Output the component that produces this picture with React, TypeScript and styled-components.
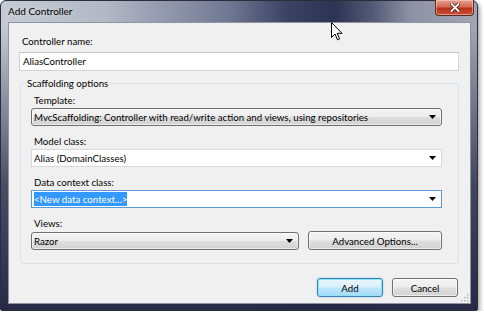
import styled, { createGlobalStyle } from "styled-components";

const GlobalStyle = createGlobalStyle`
	html, body {
		margin: 0;
		padding: 0;
		background: #ffffff;
	}
	body {
		font-family: Lato, "Liberation Sans", Arial, sans-serif;
		font-size: 9.7px;
		color: #000;
	}
`;

const ArrowDown = () => (
	<svg width="7" height="4" viewBox="0 0 7 4">
		<path d="M0 0 H7 L3.5 4 Z" fill="#000" />
	</svg>
);

const Cursor = () => (
	<CursorWrap>
		<svg width="12" height="19" viewBox="0 0 12 19">
			<path
				d="M0.5 0.5 L0.5 15.5 L4 12 L6.5 17.8 L8.6 16.9 L6.2 11.3 L11 11.3 Z"
				fill="#ffffff"
				stroke="#000000"
				strokeWidth="1"
				strokeLinejoin="round"
			/>
		</svg>
	</CursorWrap>
);

const Grip = () => (
	<GripWrap>
		<svg width="8" height="8" viewBox="0 0 8 8">
			{[
				[6, 0],
				[6, 3],
				[3, 3],
				[6, 6],
				[3, 6],
				[0, 6],
			].map(([x, y]) => (
				<rect key={`${x}-${y}`} x={x} y={y} width="1.5" height="1.5" fill="#b5b5b5" />
			))}
		</svg>
	</GripWrap>
);

export default function App() {
	return (
		<>
			<GlobalStyle />
			<Window>
				<TitleBar>
					<Title>Add Controller</Title>
					<CloseButton>
						<svg width="10" height="9" viewBox="0 0 10 9">
							<path
								d="M1.5 1 L8.5 8 M8.5 1 L1.5 8"
								stroke="#4a1a14"
								strokeWidth="3.4"
								strokeLinecap="square"
							/>
							<path
								d="M1.5 1 L8.5 8 M8.5 1 L1.5 8"
								stroke="#ffffff"
								strokeWidth="1.8"
								strokeLinecap="square"
							/>
						</svg>
					</CloseButton>
				</TitleBar>

				<Client>
					<Label>Controller name:</Label>
					<TextInput>AliasController</TextInput>

					<GroupBox>
						<Legend>Scaffolding options</Legend>

						<Label>Template:</Label>
						<Combo $kind="button">
							<ComboText>MvcScaffolding: Controller with read/write action and views, using repositories</ComboText>
							<ArrowDown />
						</Combo>

						<Label>Model class:</Label>
						<Combo $kind="edit">
							<ComboText>Alias (DomainClasses)</ComboText>
							<ArrowDown />
						</Combo>

						<Label>Data context class:</Label>
						<Combo $kind="focus">
							<ComboText>
								<Selected>&lt;New data context...&gt;</Selected>
							</ComboText>
							<ArrowDown />
						</Combo>

						<Label>Views:</Label>
						<ViewsRow>
							<Combo $kind="button" $width={268}>
								<ComboText>Razor</ComboText>
								<ArrowDown />
							</Combo>
							<Button $width={134}>Advanced Options...</Button>
						</ViewsRow>
					</GroupBox>

					<Footer>
						<Button $default $width={66}>Add</Button>
						<Button $width={66}>Cancel</Button>
					</Footer>

					<Grip />
				</Client>

				<Cursor />
			</Window>
		</>
	);
}

const Window = styled.div`
	position: relative;
	width: 478px;
	height: 311px;
	box-sizing: border-box;
	padding: 0 6px 6px 7px;
	display: flex;
	flex-direction: column;
	border: 1px solid #2a2d3c;
	border-radius: 6px 6px 2px 2px;
	background:
		linear-gradient(180deg, rgba(40, 45, 75, 0) 8%, rgba(40, 45, 75, 0.8) 60%, #262a46 100%),
		linear-gradient(
			90deg,
			#c6cbd3 0%,
			#b2b8c5 22%,
			#707792 48%,
			#3c4264 60%,
			#2d3352 70%,
			#535a76 78%,
			#8d91a3 86%,
			#a2a6b4 100%
		);
	box-shadow: 2px 3px 4px rgba(0, 0, 0, 0.35);
	font-family: Lato, "Liberation Sans", Arial, sans-serif;
`;

const TitleBar = styled.div`
	height: 21px;
	display: flex;
	align-items: flex-start;
	justify-content: space-between;
`;

const Title = styled.div`
	padding-top: 4px;
	font-size: 10px;
	color: #000;
	line-height: 13px;
	text-shadow: 0 0 6px rgba(255, 255, 255, 0.7);
`;

const CloseButton = styled.div`
	width: 39px;
	height: 16px;
	margin-top: -1px;
	margin-right: -3px;
	display: flex;
	align-items: center;
	justify-content: center;
	box-sizing: border-box;
	border: 1px solid #5a2a24;
	border-top: none;
	border-radius: 0 0 4px 4px;
	background: linear-gradient(180deg, #e8a090 0%, #d46a55 45%, #b92f17 55%, #c8503a 100%);
	box-shadow: inset 0 0 0 1px rgba(255, 220, 210, 0.5);
`;

const Client = styled.div`
	position: relative;
	flex: 1;
	display: flex;
	flex-direction: column;
	padding: 11px 11px 0 10px;
	background: #f0f0f0;
	border: 1px solid #8f94a3;
	box-sizing: border-box;
`;

const Label = styled.div`
	height: 14px;
	line-height: 14px;
	padding-left: 3px;
	color: #000;
	white-space: nowrap;
`;

const TextInput = styled.div`
	margin-top: 4px;
	height: 19px;
	box-sizing: border-box;
	padding-left: 3px;
	line-height: 17px;
	background: #fff;
	border: 1px solid #d2d4d8;
	border-top-color: #c2c4c9;
`;

const GroupBox = styled.fieldset`
	position: relative;
	margin: 12px 0 0 1px;
	padding: 9px 16px 15px 10px;
	height: 181px;
	box-sizing: border-box;
	border: 1px solid #dbe3e9;
	border-radius: 3px;
	display: flex;
	flex-direction: column;
	min-width: 0;

	& > ${Label} + * {
		margin-top: 1px;
	}
	& > ${Label}:not(:first-of-type) {
		margin-top: 8px;
	}
`;

const Legend = styled.legend`
	position: absolute;
	top: -8px;
	left: 4px;
	padding: 0 2px;
	background: #f0f0f0;
	line-height: 14px;
`;

const Combo = styled.div<{ $kind: "button" | "edit" | "focus"; $width?: number }>`
	height: 18px;
	width: ${(p) => (p.$width ? `${p.$width}px` : "auto")};
	box-sizing: border-box;
	display: flex;
	align-items: center;
	padding: 0 5px 0 2px;
	border: 1px solid
		${(p) => (p.$kind === "button" ? "#707070" : p.$kind === "focus" ? "#5a9ad6" : "#d6d8dc")};
	border-radius: ${(p) => (p.$kind === "button" ? "3px" : "0")};
	background: ${(p) =>
		p.$kind === "button"
			? "linear-gradient(180deg, #f4f4f4 0%, #ececec 48%, #dedede 52%, #d2d2d2 100%)"
			: "#ffffff"};
	box-shadow: ${(p) => (p.$kind === "button" ? "inset 0 0 0 1px rgba(255,255,255,0.6)" : "none")};
`;

const ComboText = styled.div`
	flex: 1;
	min-width: 0;
	white-space: nowrap;
	overflow: hidden;
	line-height: 14px;
`;

const Selected = styled.span`
	background: #3399ff;
	color: #fff;
	padding: 1px 0;
`;

const ViewsRow = styled.div`
	display: flex;
	align-items: center;
	justify-content: space-between;
	margin-top: 2px;
`;

const Button = styled.div<{ $default?: boolean; $width: number }>`
	width: ${(p) => p.$width}px;
	height: 19px;
	box-sizing: border-box;
	display: flex;
	align-items: center;
	justify-content: center;
	border-radius: 3px;
	border: 1px solid ${(p) => (p.$default ? "#3c7fb1" : "#707070")};
	background: ${(p) =>
		p.$default
			? "linear-gradient(180deg, #eaf6fd 0%, #d9f0fc 48%, #bee6fd 52%, #a7d9f5 100%)"
			: "linear-gradient(180deg, #f4f4f4 0%, #ececec 48%, #dedede 52%, #d2d2d2 100%)"};
	box-shadow: ${(p) =>
		p.$default
			? "inset 0 0 0 1px #8ee3f8, 0 0 2px rgba(80, 180, 240, 0.6)"
			: "inset 0 0 0 1px rgba(255,255,255,0.6)"};
`;

const Footer = styled.div`
	display: flex;
	justify-content: flex-end;
	gap: 9px;
	margin-top: 14px;
	padding-right: 1px;
`;

const GripWrap = styled.div`
	position: absolute;
	right: 1px;
	bottom: 1px;
	display: flex;
`;

const CursorWrap = styled.div`
	position: absolute;
	left: 330px;
	top: 21px;
	display: flex;
`;
